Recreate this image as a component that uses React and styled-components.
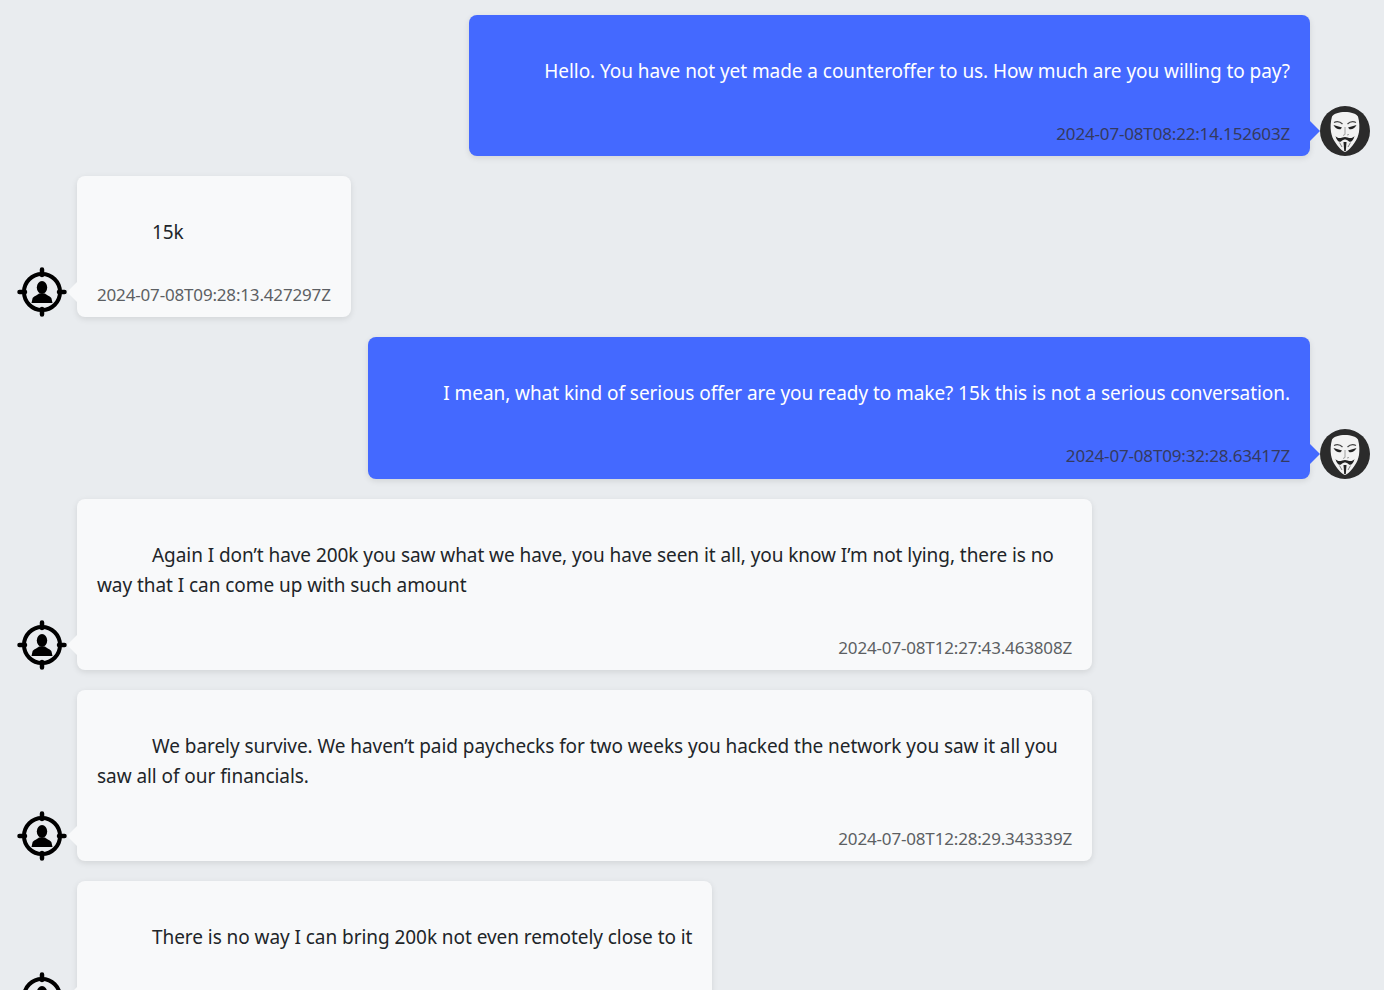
import React from 'react';
import styled, { createGlobalStyle } from 'styled-components';

const messages = [
  {
    id: 1,
    mine: true,
    text: 'Hello. You have not yet made a counteroffer to us. How much are you willing to pay?',
    time: '2024-07-08T08:22:14.152603Z',
  },
  { id: 2, mine: false, text: '15k', time: '2024-07-08T09:28:13.427297Z' },
  {
    id: 3,
    mine: true,
    text: 'I mean, what kind of serious offer are you ready to make? 15k this is not a serious conversation.',
    time: '2024-07-08T09:32:28.63417Z',
  },
  {
    id: 4,
    mine: false,
    text: 'Again I don’t have 200k you saw what we have, you have seen it all, you know I’m not lying, there is no way that I can come up with such amount',
    time: '2024-07-08T12:27:43.463808Z',
  },
  {
    id: 5,
    mine: false,
    text: 'We barely survive. We haven’t paid paychecks for two weeks you hacked the network you saw it all you saw all of our financials.',
    time: '2024-07-08T12:28:29.343339Z',
  },
  // timestamp of this one is below the fold
  {
    id: 6,
    mine: false,
    text: 'There is no way I can bring 200k not even remotely close to it',
    time: '',
  },
];

const MaskAvatar = () => (
  <svg width="50" height="50" viewBox="0 0 50 50">
    <circle cx="25" cy="25" r="25" fill="#2b2b2b" />
    <path
      d="M25 6C19 6 14 7.500 12 10.500C10.500 16 10.300 21 11 26C11.700 30 13 33 15 36C18 41 22 45 25 46C28 45 32 41 35 36C37 33 38.300 30 39 26C39.700 21 39.500 16 38 10.500C36 7.500 31 6 25 6Z"
      fill="#f2f2f2"
    />
    <path d="M13.500 19L22 21.500L20.500 23.200C18 23.800 15.500 22.500 13.500 19Z" fill="#222" />
    <path d="M36.500 19L28 21.500L29.500 23.200C32 23.800 34.500 22.500 36.500 19Z" fill="#222" />
    <path d="M14 16.500C17 15 20 15.500 22.500 18" stroke="#444" strokeWidth="1.200" fill="none" />
    <path d="M36 16.500C33 15 30 15.500 27.500 18" stroke="#444" strokeWidth="1.200" fill="none" />
    <path d="M25 21V28.500L23 29.500" stroke="#888" strokeWidth="0.8" fill="none" />
    <path d="M27 29L29 28.500" stroke="#888" strokeWidth="0.8" fill="none" />
    <path
      d="M15.500 30C18 33.500 22 31.500 25 31C28 31.500 32 33.500 34.500 30C33.500 34.500 31 36.500 29 35.500C27.500 34 26 33.500 25 33.500C24 33.500 22.500 34 21 35.500C19 36.500 16.500 34.500 15.500 30Z"
      fill="#222"
    />
    <path d="M23.500 36H26.500L25.800 45H24.200Z" fill="#222" />
    <path d="M19.500 36.500L22 41M30.500 36.500L28 41" stroke="#666" strokeWidth="0.8" fill="none" />
  </svg>
);

const TargetAvatar = () => (
  <svg width="50" height="50" viewBox="0 0 50 50">
    <circle cx="25" cy="25" r="18" fill="none" stroke="#000" strokeWidth="4" />
    <path
      d="M25 2.500V8M25 42V47.500M2.500 25H8M42 25H47.500"
      stroke="#000"
      strokeWidth="4.500"
      strokeLinecap="round"
    />
    <ellipse cx="25" cy="20.500" rx="5.200" ry="6.500" fill="#000" />
    <path d="M14.500 36L15.500 31.500C16 29.500 20 28.500 22 26.500H28C30 28.500 34 29.500 34.500 31.500L35.500 36Z" fill="#000" />
  </svg>
);

function App() {
  return (
    <>
      <GlobalStyle />
      <Page>
        {messages.map((message) => (
          <Row key={message.id} $mine={message.mine}>
            {!message.mine && (
              <Avatar>
                <TargetAvatar />
              </Avatar>
            )}
            <Bubble $mine={message.mine}>
              <MessageText>{message.text}</MessageText>
              <Timestamp $mine={message.mine}>{message.time}</Timestamp>
            </Bubble>
            {message.mine && (
              <Avatar>
                <MaskAvatar />
              </Avatar>
            )}
          </Row>
        ))}
      </Page>
    </>
  );
}

export default App;

const GlobalStyle = createGlobalStyle`
  html, body {
    margin: 0;
    height: 100%;
    overflow: hidden;
    background: #e9ecef;
  }
  body {
    font-family: "Noto Sans", sans-serif;
    color: #212529;
  }
`;

const Page = styled.main`
  display: flex;
  flex-direction: column;
  gap: 20px;
  height: 990px;
  overflow: hidden;
  padding: 15px 14px 0 17px;
  box-sizing: border-box;
`;

const Row = styled.div`
  display: flex;
  flex-shrink: 0;
  align-items: flex-end;
  gap: 10px;
  justify-content: ${(props) => (props.$mine ? 'flex-end' : 'flex-start')};
`;

const Avatar = styled.div`
  flex: 0 0 50px;
  height: 50px;
  svg {
    display: block;
  }
`;

const Bubble = styled.div`
  position: relative;
  box-sizing: border-box;
  width: fit-content;
  max-width: 1015px;
  padding: 41px 20px 9px;
  border-radius: 8px;
  background: ${(props) => (props.$mine ? '#4469ff' : '#f8f9fa')};
  color: ${(props) => (props.$mine ? '#fff' : '#212529')};
  box-shadow: 0 2px 6px rgba(0, 0, 0, 0.1);
  &::after {
    content: '';
    position: absolute;
    bottom: 15px;
    width: 0;
    height: 0;
    border-top: 10px solid transparent;
    border-bottom: 10px solid transparent;
    ${(props) =>
      props.$mine
        ? 'right: -10px; border-left: 10px solid #4469ff;'
        : 'left: -10px; border-right: 10px solid #f8f9fa;'}
  }
`;

const MessageText = styled.p`
  margin: 0;
  font-size: 19px;
  line-height: 30px;
  letter-spacing: -0.06px;
  text-indent: 55px;
  text-align: left;
`;

const Timestamp = styled.div`
  margin-top: 35px;
  min-height: 26.2px;
  font-size: 17px;
  line-height: 26.2px;
  letter-spacing: -0.17px;
  text-align: right;
  color: ${(props) => (props.$mine ? '#343a60' : '#5c5f63')};
`;
